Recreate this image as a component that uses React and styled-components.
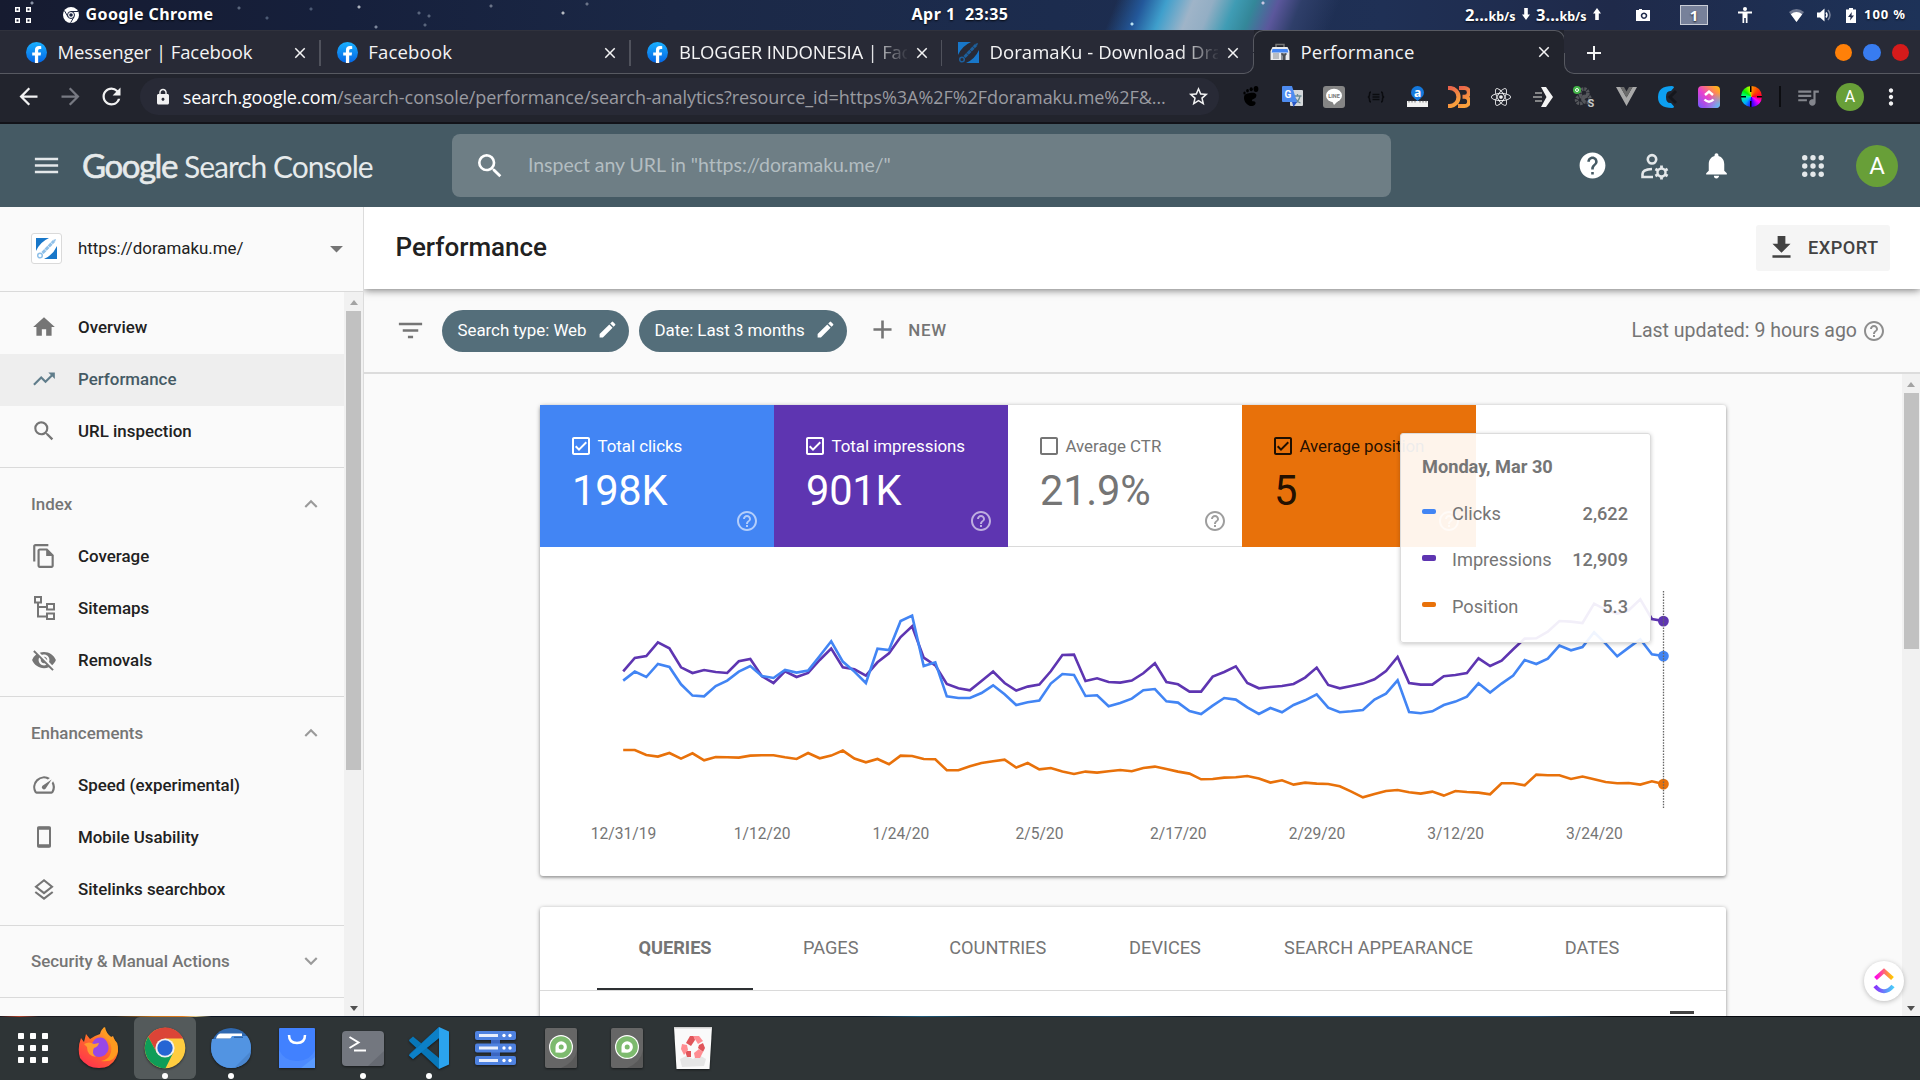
import React from "react";
import styled, { createGlobalStyle } from "styled-components";
import {
  MdHome, MdTrendingUp, MdSearch, MdVisibilityOff, MdOutlineSpeed, MdFilterList, MdEdit, MdAdd,
  MdHelp, MdHelpOutline, MdNotifications, MdArrowDropDown, MdExpandLess, MdExpandMore,
  MdMenu, MdLock, MdStarBorder, MdQueueMusic, MdMoreVert, MdRefresh, MdArrowBack, MdArrowForward,
  MdGetApp, MdOutlineCheckBox, MdCheckBoxOutlineBlank, MdClose, MdOutlineFileCopy,
} from "react-icons/md";
import { FaReact } from "react-icons/fa";

const GlobalStyle = createGlobalStyle`
  * { box-sizing: border-box; }
  html, body { margin: 0; height: 100%; overflow: hidden; }
  body { font-family: Roboto, sans-serif; background: #101522; }
  svg { display: block; flex: none; }
`;

const Desktop = styled.div`
  width: 1920px;
  height: 1080px;
  display: flex;
  flex-direction: column;
  overflow: hidden;
`;

/* ---------- system bar ---------- */

const SystemBar = styled.header`
  height: 30px;
  flex: none;
  display: grid;
  grid-template-columns: 1fr auto 1fr;
  align-items: center;
  color: #fff;
  font: 700 16px "Noto Sans", sans-serif;
  text-shadow: 0 1px 2px rgba(0, 0, 0, 0.8);
  background:
    radial-gradient(circle at 32px 3px, #8992a5 0 1px, transparent 2px),
    radial-gradient(circle at 239px 8px, #59657c 0 1px, transparent 2px),
    radial-gradient(circle at 267px 18px, #4c5a74 0 1px, transparent 2px),
    radial-gradient(circle at 311px 9px, #4c5a74 0 1px, transparent 2px),
    radial-gradient(circle at 359px 7px, #aab0bc 0 1px, transparent 2px),
    radial-gradient(circle at 376px 27px, #7d879c 0 1px, transparent 2px),
    radial-gradient(circle at 419px 13px, #59657c 0 1px, transparent 2px),
    radial-gradient(circle at 429px 16px, #59657c 0 1px, transparent 2px),
    radial-gradient(circle at 425px 25px, #59657c 0 1px, transparent 2px),
    radial-gradient(circle at 491px 6px, #6b7488 0 1px, transparent 2px),
    radial-gradient(circle at 563px 13px, #b6bac2 0 1px, transparent 2px),
    radial-gradient(circle at 587px 4px, #6b7488 0 1px, transparent 2px),
    radial-gradient(circle at 1132px 24px, #b9e2f2 0 1px, transparent 2px),
    radial-gradient(circle at 1263px 3px, #c9c6e2 0 1px, transparent 2px),
    linear-gradient(112deg, transparent 57.8%, #23589a 59.2%, #3f9fcc 60.4%, #9fb4c8 61.8%, #93aec4 62.8%, #3f9cb4 64%,
      #348799 65%, #5b579c 66.2%, #2f3f6a 67.4%, transparent 69.4%),
    linear-gradient(90deg, #161b30, #16203c 18%, #1b2846 35%, #1c2c4e 55%, #1f3055 72%, #1f2a4a 84%, #1d3258);
`;

const BarLeft = styled.div`
  display: flex;
  align-items: center;
  padding-left: 15px;
  gap: 6px;
  letter-spacing: 0.4px;
  & > svg:first-child { margin-right: 26px; }
  & > span { padding: 0 0 2px 0.5px; }
`;

const Clock = styled.div`
  white-space: pre;
  letter-spacing: 0.5px;
  padding-bottom: 2px;
`;

const BarRight = styled.div`
  display: flex;
  align-items: center;
  justify-content: flex-end;
  height: 30px;
  padding-right: 14px;
`;

const NetRate = styled.span`
  display: flex;
  align-items: baseline;
  width: 71px;
  font-size: 16.5px;
  padding-bottom: 2px;
  small { font-size: 12.5px; }
  svg { margin-left: 6px; align-self: center; }
`;

const Workspace = styled.span`
  width: 28px;
  height: 20px;
  display: grid;
  place-items: center;
  border: 1px solid #c9cdd6;
  background: #77819a;
  font-size: 15px;
  line-height: 17px;
  margin: 0 30px;
`;

const Percent = styled.span`
  font-size: 13px;
  letter-spacing: 0.9px;
  margin-left: 7px;
  padding-bottom: 2px;
`;

/* ---------- browser chrome ---------- */

const LINE = "#575961";

const TabStrip = styled.div`
  height: 44px;
  flex: none;
  display: flex;
  background: #22242d;
  font: 400 18.5px "Open Sans", "Noto Sans", sans-serif;
  color: #f4f4f5;
`;

const TabGroup = styled.div`
  position: relative;
  display: flex;
  align-items: center;
  width: ${(p) => p.$width}px;
  padding-left: ${(p) => (p.$side === "left" ? 10 : 18)}px;
  background: #282a36;
  border-top: 1px solid #30323d;
  border-radius: ${(p) => (p.$side === "left" ? "0 0 10px 0" : "0 0 0 10px")};
  &::after {
    content: "";
    position: absolute;
    inset: 50% 0 0 0;
    pointer-events: none;
    border: 0 solid ${LINE};
    border-bottom-width: 1px;
    ${(p) => (p.$side === "left" ? "border-right-width: 1px;" : "border-left-width: 1px;")}
    border-radius: inherit;
  }
`;

const Tab = styled.div`
  display: flex;
  align-items: center;
  width: 310.7px;
  height: 42px;
  padding: 0 0 0 16px;
  position: relative;
`;

const ActiveTab = styled(Tab)`
  width: 310px;
  height: 44px;
  &::before {
    content: "";
    position: absolute;
    inset: 0 -1px 50% -1px;
    border: 1px solid ${LINE};
    border-bottom: 0;
    border-radius: 10px 10px 0 0;
  }
`;

const TabTitle = styled.span`
  width: 228px;
  margin: 0 6.5px 0 10.5px;
  padding-bottom: 2px;
  white-space: nowrap;
  letter-spacing: ${(p) => p.$spacing || 0}px;
  mask-image: ${(p) => (p.$fade ? "linear-gradient(90deg, #000 190px, transparent 230px)" : "none")};
`;

const TabSeparator = styled.span`
  width: 2px;
  height: 26px;
  margin-left: 10px;
  background: #50525c;
`;

const WindowDots = styled.div`
  display: flex;
  gap: 11px;
  margin-left: auto;
  padding-right: 11px;
`;

const WindowDot = styled.span`
  width: 17.5px;
  height: 17.5px;
  border-radius: 50%;
  background: ${(p) => p.$color};
`;

const Toolbar = styled.div`
  height: 50px;
  flex: none;
  display: flex;
  align-items: center;
  padding: 0 16px 3px 15px;
  background: #22242d;
  border-bottom: 2px solid #121319;
  color: #f1f1f2;
`;

const NavButtons = styled.div`
  display: flex;
  gap: 14.5px;
  width: 125px;
  svg:nth-child(2) { color: #777982; }
`;

const Omnibox = styled.div`
  width: 1081px;
  height: 37px;
  display: flex;
  align-items: center;
  padding: 0 11px 0 14px;
  border-radius: 19px;
  background: #282a36;
  font: 400 18px "Open Sans", "Noto Sans", sans-serif;
  white-space: nowrap;
  & > svg:last-child { margin-right: -2px; }
`;

const UrlHost = styled.span`
  margin-left: 11px;
  letter-spacing: -0.18px;
  color: #fff;
`;

const UrlPath = styled.span`
  color: #9a9ba1;
  letter-spacing: -0.05px;
  flex: 1;
`;

const Extensions = styled.div`
  display: flex;
  margin-left: 11px;
`;

const ExtensionSlot = styled.div`
  width: 41.7px;
  height: 28px;
  display: grid;
  place-items: center;
`;

const HueWheel = styled.span`
  width: 21px;
  height: 21px;
  border-radius: 50%;
  background:
    linear-gradient(#000, #000) top / 1.5px 6px no-repeat,
    linear-gradient(#000, #000) bottom / 1.5px 6px no-repeat,
    linear-gradient(#000, #000) left / 5px 1.5px no-repeat,
    linear-gradient(#000, #000) right / 5px 1.5px no-repeat,
    conic-gradient(#ff9000, #f40 12%, #f03 25%, #f0f 35%, #20f 50%, #0af 62%, #0f9 75%, #0e0 85%, #e8ff00);
`;

const ToolbarDivider = styled.span`
  width: 2px;
  height: 21px;
  background: #0c0d11;
  margin: 0 14px 0 7px;
`;

const Avatar = styled.span`
  width: ${(p) => p.$size}px;
  height: ${(p) => p.$size}px;
  flex: none;
  display: grid;
  place-items: center;
  border-radius: 50%;
  background: #689f38;
  color: #fff;
  font: 400 ${(p) => p.$size * 0.57}px Roboto, sans-serif;
  margin-left: ${(p) => p.$gap || 0}px;
`;

/* ---------- console header ---------- */

const ConsoleHeader = styled.header`
  height: 83px;
  flex: none;
  display: flex;
  align-items: center;
  padding: 0 22px 0 31px;
  background: #455a64;
  color: #fff;
`;

const Logo = styled.div`
  display: flex;
  align-items: baseline;
  width: 370px;
  margin-left: 20px;
  padding-bottom: 2px;
  color: #e6eaeb;
  font: 400 30px Lato, sans-serif;
  letter-spacing: -0.98px;
  white-space: nowrap;
  b {
    font-weight: 400;
    font-size: 33px;
    letter-spacing: -1.45px;
    margin-right: 7px;
    -webkit-text-stroke: 0.6px #e6eaeb;
  }
`;

const SearchBox = styled.div`
  width: 939px;
  height: 63px;
  display: flex;
  align-items: center;
  gap: 22px;
  padding-left: 22px;
  border-radius: 8px;
  background: #6e7e85;
  font: 400 19.5px Lato, sans-serif;
  letter-spacing: -0.04px;
  span { color: #b3bdc1; padding-bottom: 2px; }
`;

const HeaderActions = styled.div`
  display: flex;
  align-items: center;
  margin-left: auto;
  gap: 32px;
`;

const AppsButton = styled.div`
  margin-left: 38px;
`;

/* ---------- body ---------- */

const Body = styled.div`
  height: 809px;
  flex: none;
  display: grid;
  grid-template-columns: 364px 1fr;
  overflow: hidden;
  background: #fafafa;
`;

const Sidebar = styled.aside`
  display: flex;
  flex-direction: column;
  border-right: 1px solid #dcdcdc;
  min-height: 0;
`;

const PropertyPicker = styled.div`
  height: 85px;
  flex: none;
  display: flex;
  align-items: center;
  padding: 0 11px 2px 31px;
  border-bottom: 1px solid #dadada;
  font-size: 16.9px;
  color: #212121;
  span { flex: 1; margin-left: 16px; }
  & > svg { color: #757575; }
`;

const SiteIcon = styled.div`
  width: 31px;
  height: 31px;
  display: grid;
  place-items: center;
  background: #fff;
  border: 1px solid #dadada;
  border-radius: 3px;
`;

const NavArea = styled.div`
  flex: 1;
  min-height: 0;
  display: flex;
`;

const NavList = styled.nav`
  flex: 1;
  overflow: hidden;
`;

const NavItem = styled.div`
  height: 52px;
  display: flex;
  align-items: center;
  gap: 21px;
  padding-left: 31px;
  font-size: 16.9px;
  font-weight: 500;
  color: ${(p) => (p.$active ? "#455a64" : "#212121")};
  background: ${(p) => (p.$active ? "#eeeeee" : "transparent")};
  svg { color: ${(p) => (p.$active ? "#607d8b" : "#757575")}; }
`;

const NavHeading = styled.div`
  height: 52px;
  display: flex;
  align-items: center;
  justify-content: space-between;
  padding: 0 20px ${(p) => (p.$closed ? 2 : 0)}px 31px;
  font-size: 16.9px;
  font-weight: 500;
  color: #757575;
  svg { color: #9a9a9a; }
`;

const NavSection = styled.section`
  padding: ${(p) => (p.$first ? "10px 0 9px" : p.$closed ? "10px 0 9px" : "10px 0 10px")};
  border-bottom: 1px solid #dadada;
  ${NavItem} { padding-bottom: ${(p) => (p.$first ? 2 : 0)}px; }
`;

const ScrollTrack = styled.div`
  width: ${(p) => p.$width}px;
  flex: none;
  display: flex;
  flex-direction: column;
  align-items: center;
  background: #f1f1f1;
`;

const ScrollArrow = styled.i`
  border: 4.5px solid transparent;
  ${(p) =>
    p.$up
      ? "border-top: 0; border-bottom: 5px solid #a3a3a3; margin: 8px 0 6px;"
      : "border-bottom: 0; border-top: 5px solid #505050; margin: auto 0 5px;"}
`;

const ScrollThumb = styled.div`
  width: 15px;
  height: ${(p) => p.$height}px;
  background: #c1c1c1;
`;

const Main = styled.main`
  display: flex;
  flex-direction: column;
  min-width: 0;
  min-height: 0;
`;

const TitleBar = styled.div`
  height: 82px;
  flex: none;
  display: flex;
  align-items: center;
  justify-content: space-between;
  padding: 0 30px 0 31.5px;
  background: #fff;
  box-shadow: 0 1px 8px rgba(0, 0, 0, 0.55);
  clip-path: inset(0 0 -12px 0);
  position: relative;
`;

const Title = styled.h1`
  margin: 0;
  font-size: 26px;
  font-weight: 500;
  color: #212121;
  padding-bottom: 2px;
`;

const ExportButton = styled.div`
  height: 46px;
  width: 134px;
  display: flex;
  align-items: center;
  gap: 11px;
  padding: 0 0 1px 10px;
  border-radius: 3px;
  background: #f5f5f5;
  color: #424242;
  font-size: 18.2px;
  font-weight: 500;
  letter-spacing: 0.45px;
`;

const FilterBar = styled.div`
  height: 85px;
  flex: none;
  display: flex;
  align-items: center;
  padding: 0 34px 0 31px;
  border-bottom: 2px solid #dcdcdc;
  color: #757575;
`;

const Chip = styled.div`
  height: 42px;
  display: flex;
  align-items: center;
  gap: 10px;
  padding: 0 11.5px 2px 15.5px;
  border-radius: 21px;
  background: #546e7a;
  color: #fff;
  font-size: 16.9px;
  letter-spacing: -0.03px;
  margin-left: ${(p) => p.$gap}px;
`;

const NewFilter = styled.div`
  display: flex;
  align-items: center;
  gap: 10px;
  margin-left: 20px;
  padding-bottom: 2px;
  font-size: 16.9px;
  font-weight: 500;
  letter-spacing: 0.8px;
`;

const Updated = styled.div`
  margin-left: auto;
  display: flex;
  align-items: center;
  gap: 5px;
  font-size: 19.5px;
`;

const ScrollRegion = styled.div`
  flex: 1;
  min-height: 0;
  display: flex;
`;

const Cards = styled.div`
  flex: 1;
  overflow: hidden;
  display: flex;
  flex-direction: column;
  gap: 31px;
  padding: 31px 176px 0;
`;

const Card = styled.section`
  position: relative;
  flex: none;
  width: 1186px;
  background: #fff;
  border-radius: 3px;
  box-shadow: 0 1px 4px rgba(0, 0, 0, 0.38), 0 2px 2px rgba(0, 0, 0, 0.12);
`;

const Metrics = styled.div`
  display: flex;
  height: 142px;
`;

const Metric = styled.div`
  position: relative;
  width: 234px;
  padding: 26px 0 0 32px;
  background: ${(p) => p.$bg};
  color: ${(p) => p.$color};
  border-bottom: ${(p) => (p.$off ? "1px solid #dadada" : "0")};
`;

const MetricLabel = styled.div`
  height: 30px;
  display: flex;
  align-items: center;
  gap: 4.5px;
  margin-left: -3px;
  font-size: 16.9px;
  letter-spacing: -0.03px;
  white-space: nowrap;
`;

const MetricValue = styled.div`
  margin-top: 5px;
  font-size: 41.6px;
  line-height: 50px;
  letter-spacing: -0.2px;
`;

const MetricHelp = styled.div`
  position: absolute;
  right: 15px;
  bottom: ${(p) => (p.$off ? 13.5 : 14.5)}px;
  color: ${(p) => p.$color};
`;

const AxisText = styled.text`
  font: 400 15.6px Roboto, sans-serif;
  fill: #757575;
  text-anchor: middle;
`;

const Tooltip = styled.div`
  position: absolute;
  left: 860px;
  top: 28px;
  width: 251px;
  height: 210px;
  padding: 9.3px 22px 0 21px;
  background: rgba(255, 255, 255, 0.92);
  border: 1px solid #dcdcdc;
  border-radius: 3px;
  box-shadow: 0 1px 4px rgba(0, 0, 0, 0.22);
  color: #757575;
  font-size: 18.2px;
`;

const TooltipTitle = styled.div`
  height: 46.6px;
  display: flex;
  align-items: center;
  font-weight: 700;
`;

const TooltipRow = styled.div`
  height: 46.5px;
  display: flex;
  align-items: center;
  i {
    width: 14px;
    height: 5.5px;
    border-radius: 2px;
    margin: -3px 16px 0 0;
    background: ${(p) => p.$color};
  }
  span { flex: 1; }
  b { font-weight: 500; }
`;

const TabsRow = styled.div`
  height: 84px;
  display: flex;
  padding-left: 57px;
  border-bottom: 1px solid #dadada;
`;

const DimensionTab = styled.div`
  width: ${(p) => p.$width}px;
  display: grid;
  place-items: center;
  font-size: 18.2px;
  color: #757575;
  font-weight: ${(p) => (p.$active ? 700 : 400)};
  border-bottom: 2px solid ${(p) => (p.$active ? "#2d3033" : "transparent")};
`;

const TableHead = styled.div`
  height: 60px;
  display: flex;
  justify-content: flex-end;
  padding: 20px 32px 0 0;
  i { width: 24px; height: 3px; background: #424242; }
`;

const FloatingLauncher = styled.div`
  position: fixed;
  left: 1864px;
  top: 961px;
  width: 40px;
  height: 40px;
  display: grid;
  place-items: center;
  border-radius: 50%;
  background: #fff;
  box-shadow: 0 1px 5px rgba(0, 0, 0, 0.25);
`;

/* ---------- dock ---------- */

const WallpaperEdge = styled.div`
  height: 1px;
  flex: none;
  background: linear-gradient(90deg, #1a1a22, #b04028 1%, #181820 2%, #222 6%, #c07018 8%, #e07818 9.5%, #d8c890 10.2%,
    #0c1422 11%, #0b1626 45%, #1d5878 48%, #0c1a28 52%, #19405c 58%, #0c1622 62%, #1f4a70 68%, #1f4a70 80%, #060a10 84%, #04070c);
`;

const Dock = styled.footer`
  height: 63px;
  flex: none;
  display: flex;
  background: #2e3436;
`;

const DockSlot = styled.div`
  position: relative;
  width: 62px;
  height: 62px;
  margin: 0 2px;
  display: grid;
  place-items: center;
  border-radius: 6px;
  background: ${(p) => (p.$active ? "#545a5b" : "transparent")};
  svg { filter: ${(p) => (p.$flat ? "none" : "drop-shadow(0 1px 1px rgba(0,0,0,.5))")}; }
`;

const RunningDot = styled.span`
  position: absolute;
  left: 28px;
  bottom: 0;
  width: 6px;
  height: 6px;
  border-radius: 50%;
  background: #fff;
`;

/* ---------- drawings ---------- */

const FacebookIcon = () => (
  <svg width="21" height="21" viewBox="0 0 24 24">
    <defs>
      <linearGradient id="fb" x1="0" y1="0" x2="0" y2="1"><stop stopColor="#19b0ff" /><stop offset="1" stopColor="#0565e4" /></linearGradient>
    </defs>
    <circle cx="12" cy="12" r="12" fill="url(#fb)" />
    <path fill="#fff" d="M16.7 15.5l.5-3.5h-3.3V9.8c0-1 .5-1.9 2-1.9h1.5v-3s-1.400-.2-2.700-.2c-2.700 0-4.500 1.600-4.500 4.600V12H7.100v3.500h3.100V24h3.700v-8.500z" />
  </svg>
);

const DoramaIcon = ({ dark, size = 21 }) => (
  <svg width={size} height={size} viewBox="0 0 21 21">
    {!dark && <rect width="21" height="21" fill="#fff" />}
    <path d="M0 0h13Q4 4 0 13z" fill="#1877c9" />
    <path d="M21 21H8q9-4 13-13z" fill="#1877c9" />
    <path d="M6.500 15L18 3" fill="none" stroke={dark ? "#1d5f9c" : "#8fc0e8"} strokeWidth="3" strokeDasharray="4 .5" />
    <circle cx="4" cy="17.500" r="2.300" fill="none" stroke={dark ? "#1d5f9c" : "#8fc0e8"} strokeWidth="1.500" />
    <path d="M17 2l3-1-1 3z" fill={dark ? "#1d5f9c" : "#8fc0e8"} />
  </svg>
);

const ConsoleFavicon = () => (
  <svg width="20" height="20" viewBox="0 0 20 20">
    <path d="M6 5V2.500h8V5" fill="none" stroke="#777" strokeWidth="1.500" />
    <path d="M2.500 5h15L19.500 9v9h-19V9z" fill="#e9ebee" />
    <path d="M2.500 7h15l.8 3.500H1.700z" fill="#4285f4" />
    <path d="M3 11h6v6H3z" fill="#b8bcc2" /><path d="M11 11h5v7h-5z" fill="#8d9299" />
    <path d="M13 18v-4l-2-2 1-1 2 1.500 2-1.500 1 1-2 2v4z" fill="#4b4f55" />
  </svg>
);

const ChromeMono = () => (
  <svg width="16" height="16" viewBox="0 0 16 16">
    <circle cx="8" cy="8" r="8" fill="#fff" />
    <g stroke="#1b2440" strokeWidth="1" fill="none"><circle cx="8" cy="8" r="3.500" /><path d="M8 4.500h7M5 9.800L1.500 3.800M11 9.800L7.600 15.800" /></g>
    <circle cx="8" cy="8" r="1.800" fill="#1b2440" />
  </svg>
);

const SquareGrid = ({ size, cell, n, hollow }) => {
  const step = (size - cell) / (n - 1);
  const out = [];
  for (let r = 0; r < n; r++)
    for (let c = 0; c < n; c++)
      out.push(
        hollow
          ? <rect key={`${r}-${c}`} x={c * step + 0.75} y={r * step + 0.75} width={cell - 1.5} height={cell - 1.5} fill="none" stroke="#fff" strokeWidth="1.500" />
          : <rect key={`${r}-${c}`} x={c * step} y={r * step} width={cell} height={cell} rx=".8" fill="#fff" />
      );
  return <svg width={size} height={size} viewBox={`0 0 ${size} ${size}`}>{out}</svg>;
};

const Arrow = ({ up }) => (
  <svg width="8" height="12" viewBox="0 0 8 12">
    <path d="M2.200 0h3.600v6.500H8L4 12 0 6.500h2.200z" fill="#fff" transform={up ? "rotate(180 4 6)" : undefined} />
  </svg>
);

const StatusIcons = () => (
  <>
    <svg width="14" height="12" viewBox="0 0 14 12">
      <path fill="#fff" fillRule="evenodd" d="M0 1h3V0h3v1h8v11H0zM8 3.500a3.200 3.200 0 1 0 .01 0z" /><circle cx="8" cy="6.700" r="1.700" fill="#fff" />
    </svg>
    <Workspace>1</Workspace>
    <svg width="14" height="16" viewBox="0 0 14 16">
      <circle cx="7" cy="2" r="2" fill="#fff" /><path fill="#fff" d="M0 4.500h14v2H9.500V16H7.800v-5H6.200v5H4.500V6.500H0z" />
    </svg>
    <Indicators>
      <svg width="15" height="13" viewBox="0 0 15 13">
        <path fill="#6f7891" d="M0 3Q7.500-3 15 3L7.500 13z" /><path fill="#fff" d="M1.800 5.200Q7.500.8 13.200 5.200L7.500 13z" />
      </svg>
      <svg width="15" height="14" viewBox="0 0 15 14">
        <path fill="#fff" d="M0 4.500h3L7.500.5v13L3 9.500H0z" /><path d="M9 4.500q2 2.500 0 5" stroke="#fff" strokeWidth="1.500" fill="none" /><path d="M11 2q4 5 0 10" stroke="#7d869d" strokeWidth="1.500" fill="none" />
      </svg>
      <svg width="12" height="15" viewBox="0 0 12 15">
        <path fill="#fff" d="M4 0h4v1.500h3V15H1V1.500h3z" /><path fill="#26304f" d="M6.800 4L3 9h2.500L5 12.500 9 7.500H6.500z" />
      </svg>
    </Indicators>
  </>
);

const Indicators = styled.div`
  display: flex;
  align-items: center;
  gap: 13px;
  margin-left: 37px;
`;

const NetRates = styled.div`
  display: flex;
  margin-right: 29px;
`;

const Foot = () => (
  <svg width="20" height="21" viewBox="0 0 20 21">
    <path d="M9 7c5-1 7.500 1 6 4-1 2-4 2-4 3.500s3 0 3.500 2-2 4-5 3.500S3 16 3 12s2.500-4.500 6-5z" /><ellipse cx="15" cy="3" rx="2.400" ry="3" />
    <ellipse cx="10.200" cy="3.200" rx="1.600" ry="2" /><ellipse cx="6.500" cy="4.700" rx="1.400" ry="1.800" /><ellipse cx="3.500" cy="7" rx="1.200" ry="1.600" />
  </svg>
);

const Translate = () => (
  <svg width="21" height="21" viewBox="0 0 21 21">
    <rect x="8" y="4" width="13" height="16" rx="1" fill="#d5d8db" />
    <path d="M11.500 10h8M15.500 8v2M18 10q-1 5-5 7M13 12q2 4 5.500 5" stroke="#6b8a94" strokeWidth="1.300" fill="none" />
    <path d="M1 0h9l5 16H1a1 1 0 0 1-1-1V1a1 1 0 0 1 1-1z" fill="#4e8cf0" /><path d="M10 16h5l-3.500 5z" fill="#2a56c6" />
    <text x="6" y="12" textAnchor="middle" fontSize="10" fontWeight="700" fontFamily="Roboto" fill="#fff">G</text>
  </svg>
);

const LineApp = () => (
  <svg width="22" height="22" viewBox="0 0 22 22">
    <rect width="22" height="22" rx="3" fill="#858585" /><ellipse cx="11" cy="9.500" rx="8" ry="6.800" fill="#fff" /><path d="M9 15l2 4 5-5z" fill="#fff" />
    <text x="11" y="11.800" textAnchor="middle" fontSize="5.500" fontWeight="700" fontFamily="Roboto" fill="#777">LINE</text>
  </svg>
);

const Braces = () => (
  <svg width="18" height="14" viewBox="0 0 18 14" fill="none" stroke="#0b0c10" strokeWidth="1.500">
    <path d="M4 2Q2.500 2 2.500 4.500T.8 7q1.700 0 1.700 2.500T4 12M14 2q1.500 0 1.500 2.500T17.200 7q-1.700 0-1.700 2.500T14 12M5.500 4.500h7M5.500 7h7M5.500 9.500h7" />
  </svg>
);

const Ruler = () => (
  <svg width="21" height="21" viewBox="0 0 21 21">
    <circle cx="10.500" cy="6.500" r="6.500" fill="#1478dc" /><path d="M7 12h7l-3.500 3z" fill="#1478dc" />
    <text x="10.500" y="10.500" textAnchor="middle" fontSize="12" fontWeight="700" fontFamily="Open Sans" fill="#fff">a</text>
    <rect y="15" width="21" height="6" fill="#f2f2f2" /><path d="M2 16.500v-2M5 16.500v-2M8 16.500v-2M13 16.500v-2M16 16.500v-2M19 16.500v-2" stroke="#555" strokeWidth=".8" />
  </svg>
);

const D3 = () => (
  <svg width="22" height="22" viewBox="0 0 22 22">
    <defs><linearGradient id="d3" x1="0" y1="0" x2=".5" y2="1"><stop stopColor="#e8604c" /><stop offset="1" stopColor="#f9a03c" /></linearGradient></defs>
    <path d="M0 2h1.500a9 9 0 0 1 0 18H0" fill="none" stroke="url(#d3)" strokeWidth="4.200" />
    <path d="M11 2h5.500a4.400 4.400 0 0 1 0 8.800H14.500h2a4.600 4.600 0 0 1 0 9.200H10" fill="none" stroke="url(#d3)" strokeWidth="4" />
  </svg>
);

const FastArrow = () => (
  <svg width="20" height="20" viewBox="0 0 20 20">
    <path d="M2 6h7M0 10h9M2 14h7" stroke="#a5a5a5" strokeWidth="1.500" /><path d="M8 0h5l7 10-7 10H8l5.500-10z" fill="#f4f4f4" />
  </svg>
);

const Gears = () => (
  <svg width="22" height="22" viewBox="0 0 22 22">
    <g fill="none" stroke="#55575c" strokeWidth="3.500" strokeDasharray="2.200 .9"><circle cx="11" cy="7" r="4" /><circle cx="7" cy="14" r="3.500" /><circle cx="13.500" cy="13" r="3.500" /></g>
    <circle cx="4" cy="4" r="4" fill="#43b548" /><circle cx="4" cy="4" r="1.500" fill="none" stroke="#fff" />
    <text x="18" y="21" textAnchor="middle" fontSize="11" fontWeight="700" fontFamily="Roboto" fill="#c8c8c8">S</text>
  </svg>
);

const Vue = () => (
  <svg width="21" height="19" viewBox="0 0 21 19"><path d="M0 0h4.500l6 10.500L16.500 0H21L10.500 19z" fill="#a9a9a9" /><path d="M4.500 0H8l2.500 4.500L13 0h3.500l-6 10.500z" fill="#6c6c6c" /></svg>
);

const Crescent = () => (
  <svg width="20" height="22" viewBox="0 0 20 22"><path d="M14 0q2 0 2 1.500L13 5q-5-.5-5 6t5 6l3 3.500q0 1.500-2 1.500Q0 22 0 11T14 0z" fill="#0d9ff0" /><path d="M18 5l-6 6 6 6" fill="none" stroke="#15171d" strokeWidth="3" /></svg>
);

const ClickUpTile = () => (
  <svg width="22" height="22" viewBox="0 0 22 22">
    <defs><linearGradient id="cu" x1="0" y1="1" x2="1" y2="0"><stop stopColor="#6a5cff" /><stop offset=".45" stopColor="#e93fd0" /><stop offset=".75" stopColor="#ff8a50" /><stop offset="1" stopColor="#ffc800" /></linearGradient>
      <radialGradient id="cu2" cx="1" cy="1" r=".7"><stop stopColor="#49ccf9" /><stop offset="1" stopColor="#49ccf9" stopOpacity="0" /></radialGradient></defs>
    <rect width="22" height="22" rx="4" fill="url(#cu)" /><rect width="22" height="22" rx="4" fill="url(#cu2)" />
    <path d="M7 9l4-3.500L15 9M6.500 13.500q4.500 4.500 9 0" fill="none" stroke="#fff" strokeWidth="2.400" />
  </svg>
);

const ClickUpMark = () => (
  <svg width="22" height="26" viewBox="0 0 22 26">
    <defs><linearGradient id="m1"><stop stopColor="#ff02f0" /><stop offset="1" stopColor="#ffc800" /></linearGradient>
      <linearGradient id="m2"><stop stopColor="#8930fd" /><stop offset="1" stopColor="#49ccf9" /></linearGradient></defs>
    <path d="M2.500 10.500L11 3l8.500 7.500" fill="none" stroke="url(#m1)" strokeWidth="4.200" />
    <path d="M2 18q9 10.500 18 0" fill="none" stroke="url(#m2)" strokeWidth="4.200" />
  </svg>
);

const ManageUser = () => (
  <svg width="29" height="28" viewBox="0 0 29 28" fill="none" stroke="#e4e8ea" strokeWidth="2.600">
    <circle cx="12" cy="7.300" r="4.200" /><path d="M13 25H2.500v-3q0-4.500 9.500-5" />
    <circle cx="21.500" cy="20.500" r="4" strokeWidth="2.400" />
    <path d="M21.500 13.500v3M21.500 24.500v3M15.400 17l2.600 1.500M25 22.500l2.600 1.500M15.400 24l2.600-1.500M25 18.500l2.600-1.500" strokeWidth="2.800" />
  </svg>
);

const DotGrid = () => (
  <svg width="22" height="22" viewBox="0 0 22 22" fill="#e4e8ea">
    {[2.75, 11, 19.25].map((y) => [2.75, 11, 19.25].map((x) => <circle key={`${x}-${y}`} cx={x} cy={y} r="2.700" />))}
  </svg>
);

const SitemapIcon = () => (
  <svg width="26" height="26" viewBox="0 0 26 26" fill="none" stroke="currentColor" strokeWidth="2">
    <rect x="4" y="2" width="6" height="5.500" /><rect x="16" y="9" width="7" height="5.500" /><rect x="16" y="18.500" width="7" height="5.500" />
    <path d="M7 8v13.500h9M7 12h9" />
  </svg>
);

const PhoneIcon = () => (
  <svg width="26" height="26" viewBox="0 0 26 26" fill="none" stroke="currentColor"><rect x="7" y="3.200" width="12" height="19.500" rx="1" strokeWidth="2" /><path d="M6.500 4.300h13M6.500 21.700h13" strokeWidth="3" /></svg>
);

const LayersIcon = () => (
  <svg width="26" height="26" viewBox="0 0 26 26" fill="none" stroke="currentColor" strokeWidth="2.100"><path d="M13 4.300l8 6.400-8 6.400-8-6.400zM4.300 16l8.700 6.700 8.700-6.700" /></svg>
);

const Firefox = () => (
  <svg width="42" height="42" viewBox="0 0 42 42">
    <defs><linearGradient id="ff" x1=".8" y1="0" x2=".2" y2="1"><stop stopColor="#ffb52b" /><stop offset=".45" stopColor="#ff6a2a" /><stop offset="1" stopColor="#ff3050" /></linearGradient></defs>
    <path d="M3 11l3 4 2-8 4 5 5-3 5-2q1-5 5-7 1 6 6 10l2-1 3 7q4 8 0 15-5 10-17 10T2 31Q-1 21 3 11z" fill="url(#ff)" />
    <path d="M26 0q-3 4 1 10 8 6 6 15-2 8-10 9 14 2 17-10 1-10-7-14-6-4-7-10z" fill="#ff9a1f" />
    <path d="M17 12q8-4 12 3 4 8-2 13-6 4-12 0-5-4-3-9z" fill="#9747e6" />
    <path d="M6 17q5-3 10 0l5-1q-1 4-5 5-3 5 2 9-9-1-9-10z" fill="#ff9a2f" />
  </svg>
);

const Chrome = () => (
  <svg width="42" height="42" viewBox="-21 -21 42 42">
    <circle r="20.300" fill="#ffcd40" />
    <path d="M0-9.500H18.200A20.300 20.300 0 0 0-16.800-11.300L-8.200 4.700z" fill="#db4437" />
    <path d="M-16.800-11.300A20.300 20.300 0 0 0 .5 20.300L8.200 4.700-8.200 4.700z" fill="#0f9d58" />
    <circle r="9.600" fill="#f1f1f1" /><circle r="7.700" fill="#2565d4" />
  </svg>
);

const Files = () => (
  <svg width="42" height="42" viewBox="0 0 42 42">
    <circle cx="21" cy="21" r="20" fill="#3069b0" /><path d="M10 6.500h22v5H6q1-4 4-5z" fill="#fff" /><path d="M23 9h13v3H23z" fill="#3a72b8" />
    <path d="M2 12h18l2-3h15q4 5 4 12a20 20 0 0 1-40 0q0-5 1-9z" fill="#5294e2" /><path d="M24 41L41 24q0 13-17 17z" fill="#4a86cf" /><path d="M24 10.300h9" stroke="#2f65a8" strokeWidth="1.300" />
  </svg>
);

const Store = () => (
  <svg width="36" height="40" viewBox="0 0 36 40"><rect width="36" height="40" rx="1" fill="#4181ff" /><path d="M0 22q6 12 19 11t17-11v18H0z" fill="#4d8bff" /><path d="M22 40L36 29v11z" fill="#5a9bff" /><path d="M10 7q0 8 8 8t8-8" fill="none" stroke="#fff" strokeWidth="2.500" /></svg>
);

const Terminal = () => (
  <svg width="42" height="35" viewBox="0 0 42 35"><rect width="42" height="35" rx="4" fill="#73777f" /><path d="M26 35L42 20v11q0 4-4 4z" fill="#666a72" /><path d="M7.500 6l9 5.500-9 5.500M12 19.500h12" fill="none" stroke="#fff" strokeWidth="2" /></svg>
);

const VsCode = () => (
  <svg width="42" height="42" viewBox="0 0 42 42">
    <path d="M1 13l4-3.500L31 31v11L2 15q-1-1-1-2z" fill="#0877b9" /><path d="M1 28.500l4 3.500L31 11V0L2 26.500q-1 1-1 2z" fill="#0b6fb0" />
    <path d="M1 28.500l4 3.500L31 11V0z" fill="#0e86cf" opacity=".75" /><path d="M31 0l10 4.500v33L31 42z" fill="#2ba3ee" />
  </svg>
);

const Server = () => (
  <svg width="41" height="34" viewBox="0 0 41 34">
    <path d="M16 8h9v18h-9z" fill="#3c66c0" />
    {[0, 12.500, 25].map((y) => (
      <g key={y}><rect y={y} width="41" height="9" rx="2" fill="#4f82e0" /><path d={`M4 ${y + 4.5}h19`} stroke="#e8eefc" strokeWidth="3" /><circle cx="29" cy={y + 4.5} r="1.700" fill="#fff" /><circle cx="35" cy={y + 4.5} r="1.700" fill="#fff" /></g>
    ))}
  </svg>
);

const Mint = () => (
  <svg width="32" height="40" viewBox="0 0 32 40">
    <rect width="32" height="40" rx="2" fill="#666" /><path d="M16 40Q30 34 32 22v16q0 2-2 2z" fill="#595959" />
    <circle cx="16" cy="19" r="12" fill="#fff" /><circle cx="16" cy="19" r="10.800" fill="#7dba6e" />
    <path d="M10.500 24.500V19a5.700 5.700 0 1 1 5.700 5.700z" fill="#fff" /><circle cx="16.200" cy="19" r="2.500" fill="#7dba6e" />
  </svg>
);

const Trash = () => (
  <svg width="38" height="42" viewBox="0 0 38 42">
    <path d="M0 0h38l-2.500 42h-33z" fill="#fafafa" /><path d="M0 0h38v1.500H0z" fill="#cfcfcf" /><path d="M6 32l6-3 7 3 6-4 7 4-2 7-22 1z" fill="#e6e6e6" />
    <path d="M12 16l4-7h4l1 4-4 6z" fill="#e0555a" /><path d="M19 9h6l4 5-5 3z" fill="#ff8d92" />
    <path d="M25 18l4-2 2 5-2 4-5-4z" fill="#e0555a" /><path d="M20 26l5-4 4 3-3 6h-5z" fill="#ff8d92" />
    <path d="M11 24h6v6h-4z" fill="#e0555a" /><path d="M8 17l5 1 1 5-4 5-3-6z" fill="#ff8d92" />
  </svg>
);

/* ---------- chart ---------- */

const toY = (a, top) => a.map((v) => top + v / 3);
const impressions = [
  ...toY([333, 293, 287, 246, 264, 321, 338, 329, 335, 338, 303, 296, 348, 368, 333, 350, 338, 299, 265, 321, 327, 346, 306, 279, 230, 198, 292, 315, 371, 384, 390, 362, 334, 368, 391, 379, 373, 333, 284, 283, 362, 354, 365, 367, 361, 339], 13),
  ...toY([339, 395, 402, 424, 424, 379, 365, 348, 398, 414, 410, 407, 401, 382, 352, 404, 414, 407, 400, 387, 362, 320, 398, 403, 403, 378, 374, 368, 324, 347, 331, 297, 265, 264, 244, 212, 214, 218, 160, 178, 190, 180, 147, 206, 212], 3),
];
const clicks = [
  ...toY([361, 334, 350, 311, 320, 372, 406, 408, 377, 361, 334, 317, 347, 353, 329, 337, 331, 287, 243, 304, 334, 368, 265, 269, 182, 166, 317, 306, 408, 413, 413, 398, 375, 402, 434, 426, 421, 370, 341, 344, 407, 405, 438, 428, 415, 390], 13),
  ...toY([416, 453, 457, 482, 491, 466, 443, 448, 471, 491, 473, 486, 464, 450, 432, 472, 486, 483, 479, 448, 430, 390, 485, 489, 483, 464, 454, 439, 399, 427, 400, 376, 329, 341, 325, 286, 300, 290, 246, 280, 318, 292, 267, 312, 317], 3),
];
const position = [
  ...toY([569, 569, 584, 589, 578, 595, 579, 600, 590, 591, 592, 586, 585, 585, 591, 596, 578, 594, 586, 571, 595, 606, 596, 612, 586, 587, 596, 597, 630, 630, 618, 608, 603, 598, 622, 608, 627, 623, 634, 641, 634, 637, 633, 629, 633, 623], 13),
  ...toY([649, 656, 664, 670, 687, 686, 682, 681, 677, 685, 697, 690, 703, 697, 700, 701, 708, 724, 741, 731, 722, 719, 726, 730, 724, 736, 722, 725, 727, 732, 699, 699, 705, 673, 675, 675, 686, 679, 687, 695, 699, 698, 703, 693, 701], 3),
];
const X0 = 83.2;
const STEP = 11.558;
const SERIES = [
  { values: impressions, color: "#5e35b1" },
  { values: clicks, color: "#4285f4" },
  { values: position, color: "#e8710a" },
];
const DATES = ["12/31/19", "1/12/20", "1/24/20", "2/5/20", "2/17/20", "2/29/20", "3/12/20", "3/24/20"];

const Chart = () => (
  <svg width="1186" height="329" viewBox="0 0 1186 329">
    {SERIES.map((s) => (
      <polyline key={s.color} fill="none" stroke={s.color} strokeWidth="2.600" points={s.values.map((y, i) => `${(X0 + i * STEP).toFixed(1)},${(y + 0.3).toFixed(1)}`).join(" ")} />
    ))}
    {SERIES.map((s) => (
      <circle key={s.color} cx={X0 + 90 * STEP} cy={s.values[90] + 0.4} r="5.400" fill={s.color} />
    ))}
    <path d="M1123.500 44v217" stroke="#666" strokeWidth="1.300" strokeDasharray="1.500 1.300" />
    {DATES.map((d, i) => <AxisText key={d} x={X0 + 0.3 + i * STEP * 12} y="291.700">{d}</AxisText>)}
  </svg>
);

/* ---------- content ---------- */

const NAV = [
  { items: [["Overview", MdHome], ["Performance", MdTrendingUp, true], ["URL inspection", MdSearch]] },
  { title: "Index", items: [["Coverage", MdOutlineFileCopy], ["Sitemaps", SitemapIcon], ["Removals", MdVisibilityOff]] },
  { title: "Enhancements", items: [["Speed (experimental)", MdOutlineSpeed], ["Mobile Usability", PhoneIcon], ["Sitelinks searchbox", LayersIcon]] },
  { title: "Security & Manual Actions", closed: true, items: [] },
];

const METRICS = [
  { label: "Total clicks", value: "198K", bg: "#4285f4", color: "#fff", help: "rgba(255,255,255,.6)" },
  { label: "Total impressions", value: "901K", bg: "#5e35b1", color: "#fff", help: "rgba(255,255,255,.6)" },
  { label: "Average CTR", value: "21.9%", bg: "#fff", color: "#757575", help: "#9e9e9e", off: true },
  { label: "Average position", value: "5", bg: "#e8710a", color: "rgba(0,0,0,.87)", help: "rgba(255,255,255,.6)" },
];

const TABS = [
  { title: "Messenger | Facebook", icon: <FacebookIcon />, spacing: -0.08 },
  { title: "Facebook", icon: <FacebookIcon />, spacing: 0.2 },
  { title: "BLOGGER INDONESIA | Fac", icon: <FacebookIcon />, spacing: -0.2, fade: true },
  { title: "DoramaKu - Download Dra", icon: <DoramaIcon dark />, spacing: 0.05, fade: true },
];

const EXTENSIONS = [Foot, Translate, LineApp, Braces, Ruler, D3, () => <FaReact size={20} />, FastArrow, Gears, Vue, Crescent, ClickUpTile, HueWheel];

const DIMENSIONS = [["QUERIES", 156], ["PAGES", 155.5], ["COUNTRIES", 178.5], ["DEVICES", 156], ["SEARCH APPEARANCE", 271], ["DATES", 156]];

const DOCK = [
  { icon: <SquareGrid size={30} cell={6} n={3} />, flat: true },
  { icon: <Firefox /> },
  { icon: <Chrome />, active: true, running: true },
  { icon: <Files />, running: true },
  { icon: <Store /> },
  { icon: <Terminal />, running: true },
  { icon: <VsCode />, running: true },
  { icon: <Server /> },
  { icon: <Mint /> },
  { icon: <Mint /> },
  { icon: <Trash /> },
];

export default function App() {
  return (
    <Desktop>
      <GlobalStyle />
      <SystemBar>
        <BarLeft><SquareGrid size={16} cell={5} n={2} hollow /><ChromeMono /><span>Google Chrome</span></BarLeft>
        <Clock>{"Apr 1  23:35"}</Clock>
        <BarRight>
          <NetRates>
            <NetRate>2...<small>kb/s</small><Arrow /></NetRate>
            <NetRate>3...<small>kb/s</small><Arrow up /></NetRate>
          </NetRates>
          <StatusIcons />
          <Percent>100 %</Percent>
        </BarRight>
      </SystemBar>

      <TabStrip>
        <TabGroup $side="left" $width={1254}>
          {TABS.map((t, i) => (
            <Tab key={t.title}>
              {t.icon}
              <TabTitle $spacing={t.spacing} $fade={t.fade}>{t.title}</TabTitle>
              <MdClose size={18} />
              {i < 3 && <TabSeparator />}
            </Tab>
          ))}
        </TabGroup>
        <ActiveTab>
          <ConsoleFavicon />
          <TabTitle $spacing={0.18}>Performance</TabTitle>
          <MdClose size={18} />
        </ActiveTab>
        <TabGroup $side="right" $width={356}>
          <MdAdd size={24} />
          <WindowDots>
            <WindowDot $color="#ff8008" /><WindowDot $color="#387cf0" /><WindowDot $color="#d61b1b" />
          </WindowDots>
        </TabGroup>
      </TabStrip>

      <Toolbar>
        <NavButtons><MdArrowBack size={27} /><MdArrowForward size={27} /><MdRefresh size={27} /></NavButtons>
        <Omnibox>
          <MdLock size={18} />
          <UrlHost>search.google.com</UrlHost>
          <UrlPath>/search-console/performance/search-analytics?resource_id=https%3A%2F%2Fdoramaku.me%2F&…</UrlPath>
          <MdStarBorder size={23} />
        </Omnibox>
        <Extensions>
          {EXTENSIONS.map((Icon, i) => <ExtensionSlot key={i}><Icon /></ExtensionSlot>)}
        </Extensions>
        <ToolbarDivider />
        <MdQueueMusic size={26} color="#84868d" />
        <Avatar $size={28} $gap={15}>A</Avatar>
        <MdMoreVert size={26} style={{ marginLeft: 14 }} />
      </Toolbar>

      <ConsoleHeader>
        <MdMenu size={31} color="#e4e8ea" />
        <Logo><b>Google</b>Search Console</Logo>
        <SearchBox><MdSearch size={32} /><span>Inspect any URL in "https://doramaku.me/"</span></SearchBox>
        <HeaderActions>
          <MdHelp size={31} />
          <ManageUser />
          <MdNotifications size={31} />
          <AppsButton><DotGrid /></AppsButton>
          <Avatar $size={42}>A</Avatar>
        </HeaderActions>
      </ConsoleHeader>

      <Body>
        <Sidebar>
          <PropertyPicker>
            <SiteIcon><DoramaIcon size={21} /></SiteIcon>
            <span>https://doramaku.me/</span>
            <MdArrowDropDown size={31} />
          </PropertyPicker>
          <NavArea>
            <NavList>
              {NAV.map((s, i) => (
                <NavSection key={i} $first={i === 0} $closed={s.closed}>
                  {s.title && <NavHeading $closed={s.closed}>{s.title}{s.closed ? <MdExpandMore size={26} /> : <MdExpandLess size={26} />}</NavHeading>}
                  {s.items.map(([label, Icon, active]) => (
                    <NavItem key={label} $active={active}><Icon size={26} />{label}</NavItem>
                  ))}
                </NavSection>
              ))}
            </NavList>
            <ScrollTrack $width={19}><ScrollArrow $up /><ScrollThumb $height={459} /><ScrollArrow /></ScrollTrack>
          </NavArea>
        </Sidebar>

        <Main>
          <TitleBar>
            <Title>Performance</Title>
            <ExportButton><MdGetApp size={31} />EXPORT</ExportButton>
          </TitleBar>
          <FilterBar>
            <MdFilterList size={31} />
            <Chip $gap={16}>Search type: Web<MdEdit size={21} /></Chip>
            <Chip $gap={10}>Date: Last 3 months<MdEdit size={21} /></Chip>
            <NewFilter><MdAdd size={31} />NEW</NewFilter>
            <Updated>Last updated: 9 hours ago<MdHelpOutline size={24} color="#8e8e8e" /></Updated>
          </FilterBar>
          <ScrollRegion>
            <Cards>
              <Card>
                <Metrics>
                  {METRICS.map((m) => (
                    <Metric key={m.label} $bg={m.bg} $color={m.color} $off={m.off}>
                      <MetricLabel>
                        {m.off ? <MdCheckBoxOutlineBlank size={24} /> : <MdOutlineCheckBox size={24} />}
                        {m.label}
                      </MetricLabel>
                      <MetricValue>{m.value}</MetricValue>
                      <MetricHelp $color={m.help} $off={m.off}><MdHelpOutline size={24} /></MetricHelp>
                    </Metric>
                  ))}
                </Metrics>
                <Chart />
                <Tooltip>
                  <TooltipTitle>Monday, Mar 30</TooltipTitle>
                  <TooltipRow $color="#4285f4"><i /><span>Clicks</span><b>2,622</b></TooltipRow>
                  <TooltipRow $color="#5e35b1"><i /><span>Impressions</span><b>12,909</b></TooltipRow>
                  <TooltipRow $color="#e8710a"><i /><span>Position</span><b>5.3</b></TooltipRow>
                </Tooltip>
              </Card>
              <Card>
                <TabsRow>
                  {DIMENSIONS.map(([label, width], i) => <DimensionTab key={label} $width={width} $active={i === 0}>{label}</DimensionTab>)}
                </TabsRow>
                <TableHead><i /></TableHead>
              </Card>
            </Cards>
            <ScrollTrack $width={18}><ScrollArrow $up /><ScrollThumb $height={256} /><ScrollArrow /></ScrollTrack>
          </ScrollRegion>
        </Main>
      </Body>
      <FloatingLauncher><ClickUpMark /></FloatingLauncher>

      <WallpaperEdge />
      <Dock>
        {DOCK.map((d, i) => (
          <DockSlot key={i} $active={d.active} $flat={d.flat}>{d.icon}{d.running && <RunningDot />}</DockSlot>
        ))}
      </Dock>
    </Desktop>
  );
}
